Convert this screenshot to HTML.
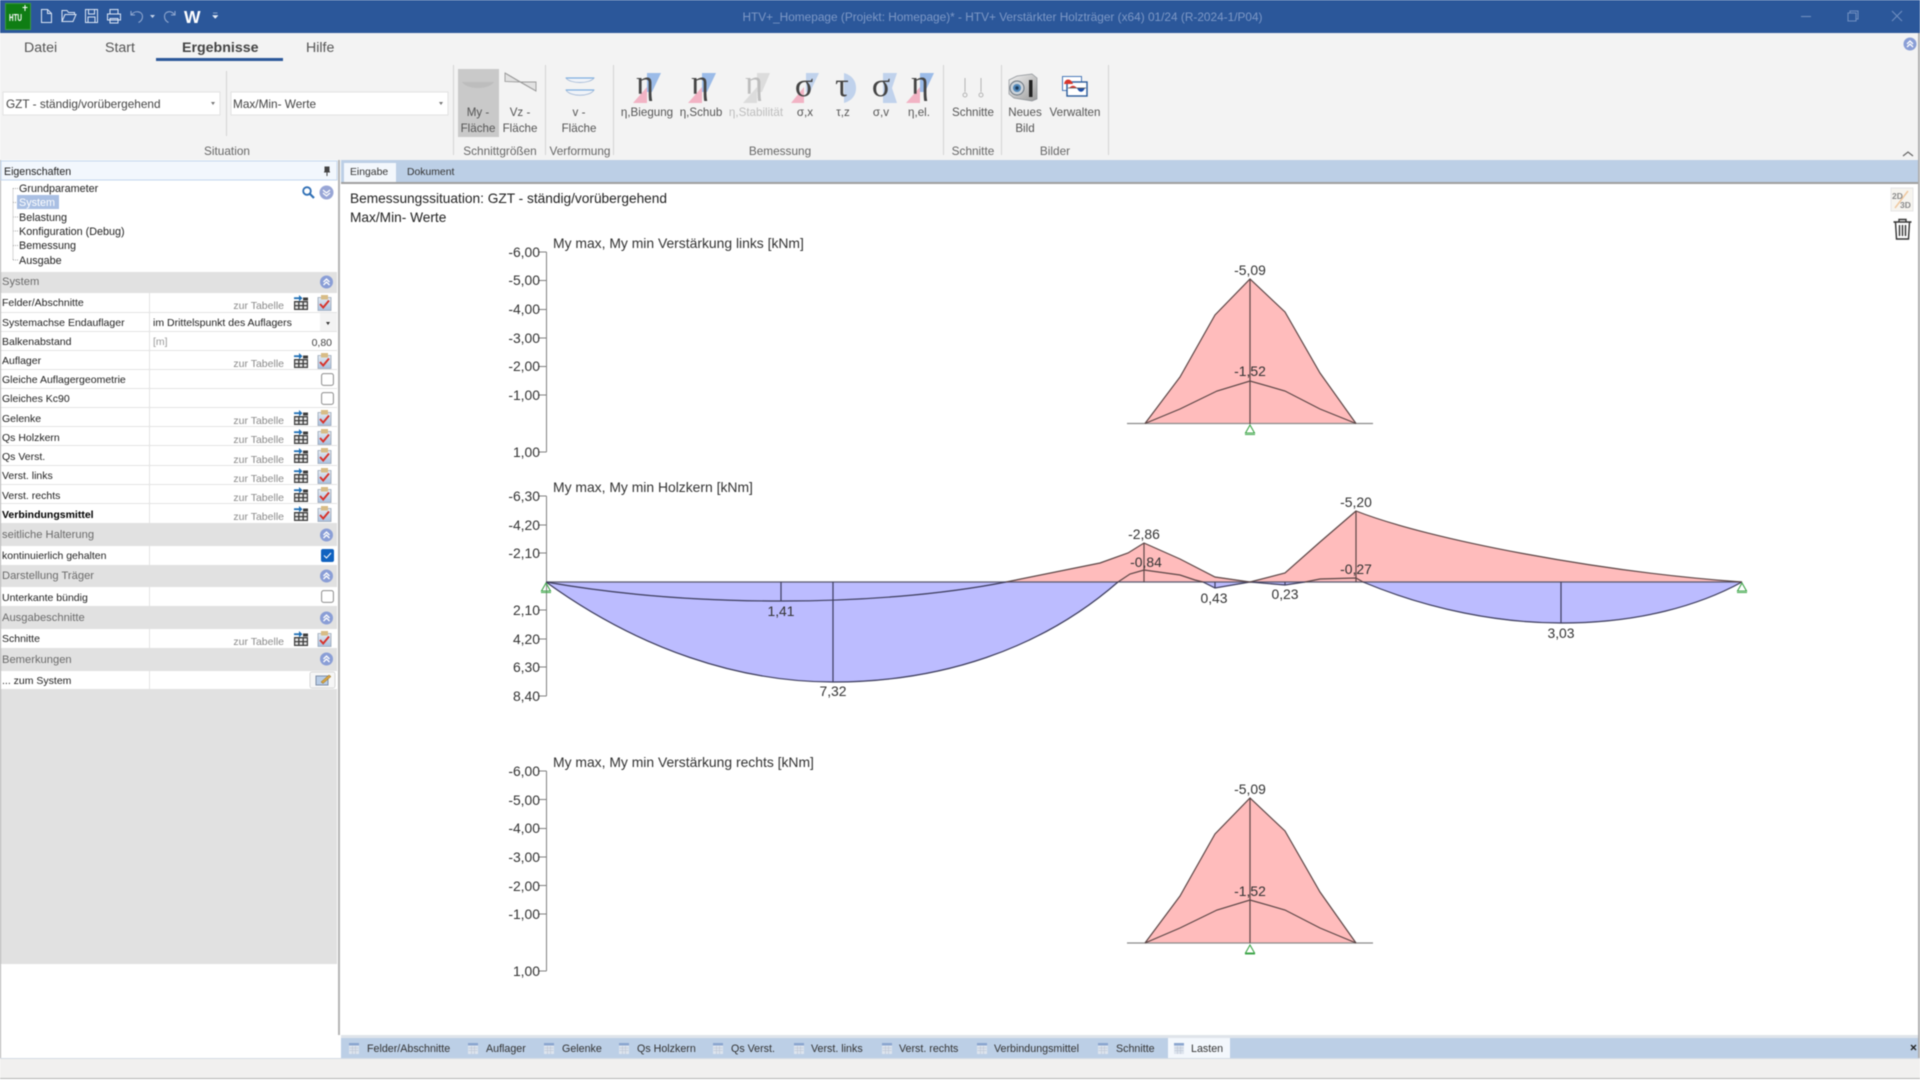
<!DOCTYPE html>
<html lang="de">
<head>
<meta charset="utf-8">
<title>HTV+ Verstärkter Holzträger</title>
<style>
html,body{margin:0;padding:0;width:1920px;height:1080px;overflow:hidden;background:#fff}
svg{position:absolute;left:0;top:0;font-family:"Liberation Sans",sans-serif;filter:blur(.4px)}
.rb{font-size:11.600px;fill:#555;text-anchor:middle}
.rl{font-size:11.800px;fill:#666;text-anchor:middle}
.s{font-size:10.500px;fill:#222}
.tr{font-size:10.800px;fill:#222}
.h{font-size:11.200px;fill:#6b6b6b}
.z{font-size:10.500px;fill:#8a8a8a;text-anchor:end}
.c{font-size:13.900px;fill:#333}
.ce{font-size:13.900px;fill:#333;text-anchor:end}
.cm{font-size:13.900px;fill:#333;text-anchor:middle}
.t{font-size:10.700px;fill:#333}
.g{font-family:"Liberation Serif",serif;font-size:34px;fill:#444;text-anchor:middle}
</style>
</head>
<body>
<svg width="1920" height="1080" viewBox="0 0 1920 1080" xmlns="http://www.w3.org/2000/svg">
<defs>
<linearGradient id="cbg" x1="0" y1="0" x2="0" y2="1"><stop offset="0" stop-color="#e4ebf3"/><stop offset="1" stop-color="#a9c0de"/></linearGradient>
<linearGradient id="cam" x1="0" y1="0" x2="1" y2="1"><stop offset="0" stop-color="#f4f4f4"/><stop offset="1" stop-color="#9a9a9a"/></linearGradient>
<symbol id="tb" viewBox="0 0 14 15"><path d="M0 3.200h6" stroke="#1f6fb5" stroke-width="1.800" fill="none"/><path d="M5 0l3.500 3.200L5 6.400z" fill="#1f6fb5"/><path d="M9 2.500h5v3H9z" fill="#3d3d3d"/><path d="M0 6h14v9H0z" fill="#3d3d3d"/><path d="M1.200 7.400h3v2.600h-3zM5.500 7.400h3v2.600h-3zM9.800 7.400h3v2.600h-3zM1.200 11.200h3v2.600h-3zM5.500 11.200h3v2.600h-3zM9.800 11.200h3v2.600h-3z" fill="#e6e6e6"/></symbol>
<symbol id="cb" viewBox="0 0 14 16"><path d="M.5 2.500h13V15.500H.5z" fill="url(#cbg)" stroke="#9aa6b6" stroke-width=".8"/><path d="M3.500 0h7v4.500h-7z" fill="#d8bc86"/><path d="M2.500 9l3.200 3.500 5.800-7" fill="none" stroke="#d8322a" stroke-width="1.900"/></symbol>
<symbol id="up" viewBox="0 0 14 14"><circle cx="7" cy="7" r="6.500" fill="#8a9ed6"/><path d="M4 7l3-3 3 3M4 10l3-3 3 3" fill="none" stroke="#fff" stroke-width="1.300"/></symbol>
<symbol id="chk" viewBox="0 0 13 13"><rect x=".6" y=".6" width="11.800" height="11.800" rx="2" fill="#fff" stroke="#8c8c8c"/></symbol>
<symbol id="tab" viewBox="0 0 10 11"><path d="M0 0h10v11H0z" fill="#dde4ee"/><path d="M0 0h10v2.500H0z" fill="#8aa5cf"/><path d="M.5 5h9M.5 7.500h9M3.500 3v8M6.500 3v8" stroke="#bfc8d6" stroke-width=".7"/></symbol>
</defs>

<!-- backgrounds -->
<rect width="1920" height="1080" fill="#fff"/>
<rect width="1920" height="33" fill="#2b579a"/>
<rect y="33" width="1920" height="127" fill="#f3f3f3"/>

<!-- title bar -->
<rect x="5.500" y="3.500" width="25" height="26" fill="#0f7d14" stroke="#3a9a40"/>
<text x="9" y="21" font-size="10" font-weight="bold" fill="#fff" textLength="13" lengthAdjust="spacingAndGlyphs">HTU</text>
<path d="M25 5v6M22.500 7.500h5" stroke="#fff" stroke-width="1"/>
<g fill="none" stroke="#dce6f5" stroke-width="1">
<path d="M41.500 9.500h6l4 4v9h-10zM47.500 9.500v4h4"/>
<path d="M62 21.500v-11h5l1.500 2h6v2M62 21.500l3-7h11l-3 7z"/>
<path d="M85.500 9.500h12v13h-12zM88.500 9.500v4.500h6v-4.500M88 22v-5h7v5"/>
<path d="M110 14v-4.500h8V14M107.500 14h13v6h-13zM110 18.500h8V23h-8z"/>
</g>
<g fill="none" stroke="#8fa7cf" stroke-width="1.100">
<path d="M131 11v4h4M131.500 15c3-5 11-4 11 1.500 0 3-2 5-4 6"/>
<path d="M175 11v4h-4M174.500 15c-3-5-10-4-10 1.500 0 3 2 5 4 6"/>
</g>
<path d="M150 15h5l-2.500 3z" fill="#c6d3e8"/>
<text x="184" y="23" font-size="17.500" font-weight="bold" fill="#fff">W</text>
<path d="M213 13h4.500M212.500 15.500h5.500l-2.750 3z" fill="#e8eef8" stroke="#e8eef8" stroke-width=".5"/>
<text x="1002.500" y="21" font-size="11.850" fill="#7d98c6" text-anchor="middle">HTV+_Homepage (Projekt: Homepage)* - HTV+ Verstärkter Holzträger (x64) 01/24 (R-2024-1/P04)</text>
<g fill="none" stroke="#6f8ec0" stroke-width="1.100">
<path d="M1801 16.500h10"/>
<path d="M1848 13h8v8h-8zM1850 13v-2h8v8h-2"/>
<path d="M1892 11l10 10M1902 11l-10 10"/>
</g>

<!-- ribbon tabs -->
<text x="24" y="52" font-size="14.200" fill="#555">Datei</text>
<text x="105" y="52" font-size="14.200" fill="#555">Start</text>
<text x="182" y="52" font-size="14.200" font-weight="bold" fill="#444">Ergebnisse</text>
<text x="306" y="52" font-size="14.200" fill="#555">Hilfe</text>
<rect x="156" y="58" width="127" height="3" fill="#2b579a"/>
<use href="#up" x="1903" y="37" width="14" height="14"/>
<path d="M1903 156l5-4 5 4" fill="none" stroke="#666" stroke-width="1.200"/>

<!-- combos -->
<rect x="3" y="92" width="217" height="23" fill="#fff" stroke="#e2e2e2"/>
<rect x="231" y="92" width="217" height="23" fill="#fff" stroke="#e2e2e2"/>
<text x="6" y="108" font-size="11.800" fill="#444">GZT - ständig/vorübergehend</text>
<text x="233" y="108" font-size="11.800" fill="#444">Max/Min- Werte</text>
<path d="M211 102h4l-2 3zM439 102h4l-2 3z" fill="#777"/>

<!-- ribbon separators -->
<path d="M226.500 71v65M453.500 65v90M545.500 65v90M613.500 65v90M943.500 65v90M1001.500 65v90M1108.500 65v90" stroke="#d4d4d4"/>

<!-- ribbon buttons -->
<rect x="458" y="69" width="41" height="68" fill="#c9c9c9"/>
<path d="M462 82h32c-5 8-27 8-32 0z" fill="#bdbdbd"/>
<path d="M505 73l15 9-15-.5zM520 82l16 9V82z" fill="#e2e2e2" stroke="#9a9a9a" stroke-width=".9"/>
<path d="M505 73l31 18" stroke="#9a9a9a"/>
<g fill="#f0f3f8" stroke="#a8bcd8" stroke-width=".9">
<path d="M566 78h28c-4 6-24 6-28 0z"/>
<path d="M566 90h28c-4 7-24 7-28 0z"/>
</g>
<path d="M566 78h28M566 90h28" stroke="#7fb0e0" stroke-width="1.200"/>
<text x="478" y="116" class="rb">My -</text><text x="478" y="132" class="rb">Fläche</text>
<text x="520" y="116" class="rb">Vz -</text><text x="520" y="132" class="rb">Fläche</text>
<text x="579" y="116" class="rb">v -</text><text x="579" y="132" class="rb">Fläche</text>

<!-- eta / sigma icons -->
<path d="M633 103l14-16v16z" fill="#f2b3c4"/><path d="M647 73h14l-9 19h-5z" fill="#9bbbe8"/>
<path d="M688 103l14-16v16z" fill="#f2b3c4"/><path d="M702 73h14l-9 19h-5z" fill="#9bbbe8"/>
<path d="M743 103l14-16v16z" fill="#dcdcdc"/><path d="M757 73h13l-8 19h-5z" fill="#dcdcdc"/>
<path d="M791 103l13-16v16z" fill="#f2b3c4"/><path d="M806 73h13l-9 19h-4z" fill="#c0d2ec"/>
<path d="M844 73c10 3 12 10 12 15s-2 12-12 15z" fill="#c0d2ec"/>
<path d="M883 73h14l-5 15 5 15h-14z" fill="#c0d2ec"/>
<path d="M906 103l14-16v16z" fill="#f2b3c4"/><path d="M920 73h14l-9 19h-5z" fill="#9bbbe8"/>
<text x="645" y="94" class="g">η</text>
<text x="700" y="94" class="g">η</text>
<text x="754" y="94" class="g" style="fill:#bdbdbd">η</text>
<text x="804" y="96" class="g">σ</text>
<text x="842" y="96" class="g">τ</text>
<text x="881" y="96" class="g">σ</text>
<text x="920" y="94" class="g">η</text>
<text x="647" y="116" class="rb">η,Biegung</text>
<text x="701" y="116" class="rb">η,Schub</text>
<text x="756" y="116" class="rb" style="fill:#bdbdbd">η,Stabilität</text>
<text x="805" y="116" class="rb">σ,x</text>
<text x="843" y="116" class="rb">τ,z</text>
<text x="881" y="116" class="rb">σ,v</text>
<text x="919" y="116" class="rb">η,el.</text>
<!-- Schnitte icon -->
<g fill="none" stroke="#b5b5b5"><path d="M965 78v14M981 78v14"/><circle cx="965" cy="95" r="2"/><circle cx="981" cy="95" r="2"/></g>
<text x="973" y="116" class="rb">Schnitte</text>
<!-- camera -->
<path d="M1009 80l8-4 15-2 5 4 0 21-5 2-18-3-5-4z" fill="url(#cam)" stroke="#8d9297" stroke-width=".7"/>
<circle cx="1017" cy="88" r="7" fill="#ccd3da" stroke="#6a747e"/><circle cx="1017" cy="88" r="4" fill="#4f86b8"/><circle cx="1017" cy="88" r="1.700" fill="#1d3a58"/>
<rect x="1029" y="80" width="3.500" height="17" fill="#222"/>
<text x="1025" y="116" class="rb">Neues</text><text x="1025" y="132" class="rb">Bild</text>
<!-- verwalten -->
<rect x="1062.500" y="76.500" width="19" height="14" fill="#fff" stroke="#4a78b8"/>
<rect x="1067" y="82" width="20" height="14" fill="#fff" stroke="#2a5a9a" stroke-width="1.400"/>
<path d="M1064 84c1-6 7-6 9 0z" fill="#d8362c"/>
<path d="M1069 88c3-3 5-3 8 0z" fill="#d8362c"/>
<path d="M1077 88h8c-2 5-6 5-8 0z" fill="#1e4fa8"/>
<path d="M1068 88h18" stroke="#555" stroke-width=".7"/>
<text x="1075" y="116" class="rb">Verwalten</text>

<text x="227" y="155" class="rl">Situation</text>
<text x="500" y="155" class="rl">Schnittgrößen</text>
<text x="580" y="155" class="rl">Verformung</text>
<text x="780" y="155" class="rl">Bemessung</text>
<text x="973" y="155" class="rl">Schnitte</text>
<text x="1055" y="155" class="rl">Bilder</text>

<!-- document tab bar -->
<rect x="341" y="160" width="1579" height="22" fill="#bccfe6"/>
<rect x="341" y="182" width="1579" height="2" fill="#a0a0a0"/>
<rect x="344" y="163" width="52" height="19" fill="#f3f7fc"/>
<text x="350" y="175" font-size="10.400" fill="#333">Eingabe</text>
<text x="407" y="175" font-size="10.400" fill="#333">Dokument</text>

<!-- sidebar -->
<rect y="160" width="338" height="804" fill="#fff"/>
<rect x="338" y="160" width="2" height="875" fill="#b4b4b4"/>
<rect x="0" y="160" width="1" height="898" fill="#b0b0b0"/>
<rect x="1" y="161" width="336" height="19" fill="#f2f7fd" stroke="#c3d7ee"/>
<text x="4" y="175" font-size="10.600" fill="#222">Eigenschaften</text>
<path d="M325 167h4v5h-4zM324 172h6M327 172v4" fill="#444" stroke="#444"/>

<path d="M13 188.500v72M13 188.500h5M13 202.500h4M13 217h5M13 231h5M13 245.500h5M13 260h5" stroke="#aaa" stroke-dasharray="1 1" fill="none"/>
<rect x="17" y="195" width="42" height="14" fill="#a9bfe3"/>
<text x="19" y="192" class="tr">Grundparameter</text>
<text x="19" y="206" class="tr" style="fill:#fff">System</text>
<text x="19" y="221" class="tr">Belastung</text>
<text x="19" y="235" class="tr">Konfiguration (Debug)</text>
<text x="19" y="249" class="tr">Bemessung</text>
<text x="19" y="264" class="tr">Ausgabe</text>
<circle cx="307" cy="191" r="3.800" fill="none" stroke="#2f6fb5" stroke-width="1.800"/><path d="M310 194l4 4" stroke="#2f6fb5" stroke-width="2.200"/>
<circle cx="326.500" cy="192.500" r="7" fill="#98a6d6"/><path d="M323 190l3.500 3 3.500-3M323 193l3.500 3 3.500-3" fill="none" stroke="#fff" stroke-width="1.200"/>

<!-- grey section bands -->
<g fill="#e1e1e1">
<rect x="1" y="272" width="336" height="21"/>
<rect x="1" y="523" width="336" height="23"/>
<rect x="1" y="565" width="336" height="22"/>
<rect x="1" y="606" width="336" height="23"/>
<rect x="1" y="648" width="336" height="23"/>
<rect x="1" y="689" width="336" height="275"/>
</g>
<g stroke="#e4e4e4">
<path d="M1 312.500h336M1 331.500h336M1 350.500h336M1 369.500h336M1 388.500h336M1 407.500h336M1 426.500h336M1 445.500h336M1 465.500h336M1 484.500h336M1 503.500h336"/>
<path d="M149.500 293v230M149.500 546v19M149.500 587v19M149.500 629v19M149.500 671v18"/>
</g>

<text x="2" y="285" class="h">System</text>
<text x="2" y="538" class="h">seitliche Halterung</text>
<text x="2" y="579" class="h">Darstellung Träger</text>
<text x="2" y="621" class="h">Ausgabeschnitte</text>
<text x="2" y="663" class="h">Bemerkungen</text>
<use href="#up" x="319.500" y="275" width="14" height="14"/>
<use href="#up" x="319.500" y="528" width="14" height="14"/>
<use href="#up" x="319.500" y="569" width="14" height="14"/>
<use href="#up" x="319.500" y="611" width="14" height="14"/>
<use href="#up" x="319.500" y="652" width="14" height="14"/>

<text x="2" y="306" class="s">Felder/Abschnitte</text>
<text x="2" y="326" class="s">Systemachse Endauflager</text>
<text x="2" y="345" class="s">Balkenabstand</text>
<text x="2" y="364" class="s">Auflager</text>
<text x="2" y="383" class="s">Gleiche Auflagergeometrie</text>
<text x="2" y="402" class="s">Gleiches Kc90</text>
<text x="2" y="422" class="s">Gelenke</text>
<text x="2" y="441" class="s">Qs Holzkern</text>
<text x="2" y="460" class="s">Qs Verst.</text>
<text x="2" y="479" class="s">Verst. links</text>
<text x="2" y="499" class="s">Verst. rechts</text>
<text x="2" y="518" class="s" font-weight="bold" style="fill:#000">Verbindungsmittel</text>
<text x="2" y="559" class="s">kontinuierlich gehalten</text>
<text x="2" y="601" class="s">Unterkante bündig</text>
<text x="2" y="642" class="s">Schnitte</text>
<text x="2" y="684" class="s">... zum System</text>

<text x="153" y="326" class="s">im Drittelspunkt des Auflagers</text>
<rect x="320" y="313" width="17" height="18" fill="#f3f3f3"/>
<path d="M326 322h4l-2 3z" fill="#333"/>
<text x="153" y="345" font-size="10.500" fill="#999">[m]</text>
<text x="332" y="346" font-size="10.500" fill="#444" text-anchor="end">0,80</text>

<g>
<text x="284" y="309" class="z">zur Tabelle</text><use href="#tb" x="294" y="295" width="14" height="15"/><use href="#cb" x="317.500" y="295" width="14" height="16"/>
<text x="284" y="367" class="z">zur Tabelle</text><use href="#tb" x="294" y="353" width="14" height="15"/><use href="#cb" x="317.500" y="353" width="14" height="16"/>
<text x="284" y="424" class="z">zur Tabelle</text><use href="#tb" x="294" y="410" width="14" height="15"/><use href="#cb" x="317.500" y="410" width="14" height="16"/>
<text x="284" y="443" class="z">zur Tabelle</text><use href="#tb" x="294" y="429" width="14" height="15"/><use href="#cb" x="317.500" y="429" width="14" height="16"/>
<text x="284" y="463" class="z">zur Tabelle</text><use href="#tb" x="294" y="448" width="14" height="15"/><use href="#cb" x="317.500" y="448" width="14" height="16"/>
<text x="284" y="482" class="z">zur Tabelle</text><use href="#tb" x="294" y="468" width="14" height="15"/><use href="#cb" x="317.500" y="468" width="14" height="16"/>
<text x="284" y="501" class="z">zur Tabelle</text><use href="#tb" x="294" y="487" width="14" height="15"/><use href="#cb" x="317.500" y="487" width="14" height="16"/>
<text x="284" y="520" class="z">zur Tabelle</text><use href="#tb" x="294" y="506" width="14" height="15"/><use href="#cb" x="317.500" y="506" width="14" height="16"/>
<text x="284" y="645" class="z">zur Tabelle</text><use href="#tb" x="294" y="631" width="14" height="15"/><use href="#cb" x="317.500" y="631" width="14" height="16"/>
</g>
<use href="#chk" x="321" y="373" width="13" height="13"/>
<use href="#chk" x="321" y="392" width="13" height="13"/>
<use href="#chk" x="321" y="590" width="13" height="13"/>
<rect x="321" y="549" width="13" height="13" rx="2" fill="#0f62c0"/><path d="M324 555.500l2.500 2.500 4.500-5" fill="none" stroke="#fff" stroke-width="1"/>
<rect x="310" y="672" width="25" height="16" rx="2" fill="#f6f6f6" stroke="#d8d8d8"/>
<path d="M316 676h12v9h-12z" fill="#b9cde6" stroke="#7f8fa8"/><path d="M321 682l8-7 2 1.500-8 7z" fill="#d9a441" stroke="#8a6a22" stroke-width=".5"/>

<!-- main area -->
<text x="350" y="203" font-size="13.700" fill="#222">Bemessungssituation: GZT - ständig/vorübergehend</text>
<text x="350" y="222" font-size="13.700" fill="#222">Max/Min- Werte</text>

<rect x="1891" y="188" width="22" height="23" fill="#f6f4ef" stroke="#e6e6e6"/>
<path d="M1908 191l-13 17" stroke="#f0c9a0" stroke-width="1.500"/>
<text x="1892" y="199" font-size="8.500" font-weight="bold" fill="#8a8a8a">2D</text>
<text x="1900" y="208" font-size="8.500" font-weight="bold" fill="#8a8a8a">3D</text>
<g fill="none" stroke="#333" stroke-width="1.400">
<path d="M1893.500 222h18M1899 222v-2.500h7v2.500M1895.500 222l1 17h12l1-17"/>
<path d="M1899.500 225v11M1902.500 225v11M1905.500 225v11"/>
</g>

<!-- chart 1 -->
<text x="553" y="248" class="c">My max, My min Verstärkung links [kNm]</text>
<path d="M546.500 252v200M538 252h8.500M538 280.500h8.500M538 309.500h8.500M538 338h8.500M538 366.500h8.500M538 395h8.500M538 452h8.500" fill="none" stroke="#808080"/>
<text x="540" y="257" class="ce">-6,00</text><text x="540" y="285" class="ce">-5,00</text><text x="540" y="314" class="ce">-4,00</text><text x="540" y="343" class="ce">-3,00</text><text x="540" y="371" class="ce">-2,00</text><text x="540" y="400" class="ce">-1,00</text><text x="540" y="457" class="ce">1,00</text>
<path d="M1145 423.500L1180 377L1215 315L1250 279L1285 312L1320 373L1356 423.500Z" fill="#ffbcbc"/>
<path d="M1127 423.500H1373" stroke="#8a8a8a" stroke-width="1.300"/>
<path d="M1145 423.500L1180 377L1215 315L1250 279L1285 312L1320 373L1356 423.500M1145 423.500L1180 409L1217 391L1250 381L1285 391L1320 409L1356 423.500M1250 279V424" fill="none" stroke="#5c4646" stroke-width="1.200"/>
<text x="1250" y="275" class="cm">-5,09</text>
<text x="1250" y="376" class="cm">-1,52</text>
<path d="M1250 425l-4.500 8h9zM1245 434.500h10" fill="none" stroke="#3fa64a" stroke-width="1.100"/>

<!-- chart 2 -->
<text x="553" y="492" class="c">My max, My min Holzkern [kNm]</text>
<path d="M546.500 496v200M538 496h8.500M538 525h8.500M538 553h8.500M538 610h8.500M538 639h8.500M538 667h8.500M538 696h8.500" fill="none" stroke="#808080"/>
<text x="540" y="501" class="ce">-6,30</text><text x="540" y="530" class="ce">-4,20</text><text x="540" y="558" class="ce">-2,10</text><text x="540" y="615" class="ce">2,10</text><text x="540" y="644" class="ce">4,20</text><text x="540" y="672" class="ce">6,30</text><text x="540" y="701" class="ce">8,40</text>
<g fill="#bcbcff">
<path d="M546 582C640 650 740 682 833 682C940 682 1040 650 1118 582Z"/>
<path d="M1203 582L1215 588L1250 582Z"/>
<path d="M1250 582L1285 585L1305 582Z"/>
<path d="M1363 582C1430 610 1500 623 1561 623C1640 623 1700 605 1742 582Z"/>
</g>
<g fill="#ffbcbc">
<path d="M1006 582L1100 563L1128 553L1144 543L1180 559L1215 577L1250 582Z"/>
<path d="M1250 582L1285 573L1320 542L1356 511C1430 540 1600 572 1742 582Z"/>
</g>
<path d="M546 582H1742" stroke="#57576e" stroke-width="1.300"/>
<g fill="none" stroke="#3c3c5c" stroke-width="1.200">
<path d="M546 582C640 650 740 682 833 682C940 682 1040 650 1118 582"/>
<path d="M546 582C620 595 700 601 781 601C860 601 940 595 1006 582"/>
<path d="M781 582V601M833 582V682M1561 582V623M1215 582V588M1285 582V585"/>
<path d="M1203 582L1215 588L1250 582L1285 585L1305 582"/>
<path d="M1363 582C1430 610 1500 623 1561 623C1640 623 1700 605 1742 582"/>
</g>
<g fill="none" stroke="#5c4646" stroke-width="1.200">
<path d="M1006 582L1100 563L1128 553L1144 543L1180 559L1215 577L1250 582L1285 573L1320 542L1356 511C1430 540 1600 572 1742 582"/>
<path d="M1118 582L1130 574L1144 570L1180 575L1195 580L1203 582"/>
<path d="M1305 582L1320 579L1356 578L1363 582"/>
<path d="M1144 543V582M1356 511V582"/>
</g>
<text x="781" y="616" class="cm">1,41</text>
<text x="833" y="696" class="cm">7,32</text>
<text x="1561" y="638" class="cm">3,03</text>
<text x="1144" y="539" class="cm">-2,86</text>
<text x="1146" y="567" class="cm">-0,84</text>
<text x="1214" y="603" class="cm">0,43</text>
<text x="1285" y="599" class="cm">0,23</text>
<text x="1356" y="507" class="cm">-5,20</text>
<text x="1356" y="574" class="cm">-0,27</text>
<path d="M546 583l-4.500 8h9zM541 592.500h10M1742 583l-4.500 8h9zM1737 592.500h10" fill="none" stroke="#3fa64a" stroke-width="1.100"/>

<!-- chart 3 -->
<text x="553" y="767" class="c">My max, My min Verstärkung rechts [kNm]</text>
<path d="M546.500 771v200M538 771h8.500M538 799.500h8.500M538 828.500h8.500M538 857h8.500M538 885.500h8.500M538 914h8.500M538 971h8.500" fill="none" stroke="#808080"/>
<text x="540" y="776" class="ce">-6,00</text><text x="540" y="805" class="ce">-5,00</text><text x="540" y="833" class="ce">-4,00</text><text x="540" y="862" class="ce">-3,00</text><text x="540" y="891" class="ce">-2,00</text><text x="540" y="919" class="ce">-1,00</text><text x="540" y="976" class="ce">1,00</text>
<path d="M1145 943L1180 896L1215 834L1250 798L1285 831L1320 892L1356 943Z" fill="#ffbcbc"/>
<path d="M1127 943H1373" stroke="#8a8a8a" stroke-width="1.300"/>
<path d="M1145 943L1180 896L1215 834L1250 798L1285 831L1320 892L1356 943M1145 943L1180 928L1217 910L1250 900L1285 910L1320 928L1356 943M1250 798V943" fill="none" stroke="#5c4646" stroke-width="1.200"/>
<text x="1250" y="794" class="cm">-5,09</text>
<text x="1250" y="896" class="cm">-1,52</text>
<path d="M1250 945l-4.500 8h9zM1245 954h10" fill="none" stroke="#3fa64a" stroke-width="1.100"/>

<!-- bottom tabs -->
<rect x="341" y="1035" width="1579" height="3" fill="#dfe4ea"/>
<rect x="341" y="1038" width="1579" height="20" fill="#bccfe6"/>
<rect x="1168" y="1038" width="62" height="20" fill="#f3f7fc"/>
<use href="#tab" x="349" y="1043" width="10" height="11"/><text x="367" y="1052" class="t">Felder/Abschnitte</text>
<use href="#tab" x="468" y="1043" width="10" height="11"/><text x="486" y="1052" class="t">Auflager</text>
<use href="#tab" x="544" y="1043" width="10" height="11"/><text x="562" y="1052" class="t">Gelenke</text>
<use href="#tab" x="619" y="1043" width="10" height="11"/><text x="637" y="1052" class="t">Qs Holzkern</text>
<use href="#tab" x="713" y="1043" width="10" height="11"/><text x="731" y="1052" class="t">Qs Verst.</text>
<use href="#tab" x="794" y="1043" width="10" height="11"/><text x="811" y="1052" class="t">Verst. links</text>
<use href="#tab" x="882" y="1043" width="10" height="11"/><text x="899" y="1052" class="t">Verst. rechts</text>
<use href="#tab" x="977" y="1043" width="10" height="11"/><text x="994" y="1052" class="t">Verbindungsmittel</text>
<use href="#tab" x="1098" y="1043" width="10" height="11"/><text x="1116" y="1052" class="t">Schnitte</text>
<use href="#tab" x="1174" y="1043" width="10" height="11"/><text x="1191" y="1052" class="t">Lasten</text>
<path d="M1911 1045l5 5M1916 1045l-5 5" stroke="#222" stroke-width="1.300"/>

<!-- status bar -->
<rect y="1059" width="1920" height="19" fill="#f1f0ef"/>
<rect y="1058" width="1920" height="1" fill="#d4dbe4"/>
<rect y="1078" width="1920" height="1" fill="#b5b5b5"/>
<rect x="1918" y="33" width="2" height="1025" fill="#b0b0b0"/>
</svg>
</body>
</html>
